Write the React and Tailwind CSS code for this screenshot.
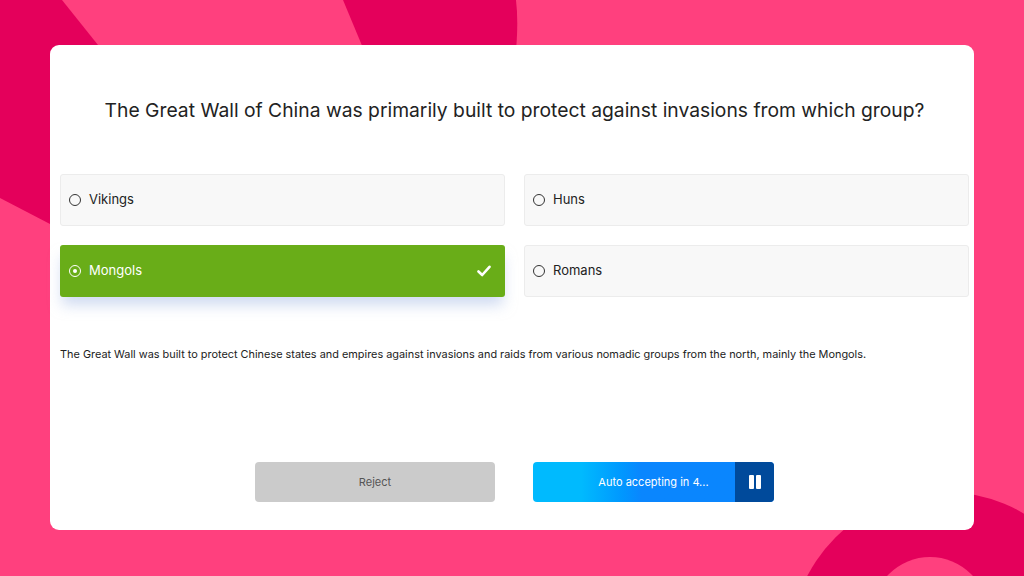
import React from "react";

function Radio({ selected }) {
  if (selected) {
    return (
      <span className="flex h-[12px] w-[12px] items-center justify-center rounded-full border-[1.5px] border-white">
        <span className="h-[4px] w-[4px] rounded-full bg-white" />
      </span>
    );
  }
  return <span className="h-[12px] w-[12px] rounded-full border-[1.5px] border-[#333]" />;
}

function Option({ label, selected }) {
  if (selected) {
    return (
      <div className="flex h-[52px] items-center rounded-[3px] bg-[#69ad18] pl-[9px] pr-[14px] text-white shadow-[0_10px_14px_-2px_rgba(170,190,230,0.55)]">
        <Radio selected />
        <span className="ml-[8px] text-[13px]">{label}</span>
        <svg className="ml-auto" width="14" height="12" viewBox="0 0 14 12">
          <path d="M1.5 6.5 L5.2 10 L12.5 1.8" fill="none" stroke="white" strokeWidth="2.6" strokeLinecap="round" strokeLinejoin="round" />
        </svg>
      </div>
    );
  }
  return (
    <div className="flex h-[52px] items-center rounded-[3px] border border-[#ececec] bg-[#f8f8f8] pl-[8px] text-[#222]">
      <Radio />
      <span className="ml-[8px] text-[13px]">{label}</span>
    </div>
  );
}

export default function App() {
  return (
    <div
      className="relative h-[576px] w-[1024px] overflow-hidden bg-[#ff407e]"
      style={{ fontFamily: "Inter, 'Liberation Sans', sans-serif" }}
    >
      <svg className="absolute left-0 top-0" width="1024" height="576" viewBox="0 0 1024 576">
        <path d="M0 0 L62 0 L110 60 L50 224 L0 198 Z" fill="#e4005b" />
        <path d="M343 0 L516 0 Q519 25 515 60 L368 60 Z" fill="#e4005b" />
        <circle cx="945" cy="647" r="155" fill="#e4005b" />
        <circle cx="930" cy="615" r="58" fill="#ff407e" />
      </svg>
      <div className="relative ml-[50px] mt-[45px] flex h-[485px] w-[924px] flex-col rounded-[9px] bg-white pl-[10px] pr-[5px]">
        <h1 className="mt-[52px] text-center text-[19.3px] leading-[26px] text-[#222]">
          The Great Wall of China was primarily built to protect against invasions from which group?
        </h1>
        <div className="mt-[51px] grid grid-cols-2 gap-x-[19px] gap-y-[19px]">
          <Option label="Vikings" />
          <Option label="Huns" />
          <Option label="Mongols" selected />
          <Option label="Romans" />
        </div>
        <p className="mt-[50px] text-[10.9px] leading-[14px] text-[#222]">
          The Great Wall was built to protect Chinese states and empires against invasions and raids from various nomadic groups from the north, mainly the Mongols.
        </p>
        <div className="mt-[101px] flex justify-center gap-[38px]">
          <button className="h-[40px] w-[240px] rounded-[4px] bg-[#cbcbcb] text-[11px] text-[#555]">
            Reject
          </button>
          <div className="relative flex h-[40px] w-[241px] items-center justify-center overflow-hidden rounded-[4px] bg-gradient-to-r from-[#00bafe] from-20% to-[#0a86fe] to-45%">
            <span className="text-[11px] text-white">Auto accepting in 4...</span>
            <div className="absolute right-0 top-0 flex h-full w-[39px] items-center justify-center gap-[2px] bg-[#004a9b]">
              <span className="h-[14px] w-[5px] rounded-[1px] bg-white" />
              <span className="h-[14px] w-[5px] rounded-[1px] bg-white" />
            </div>
          </div>
        </div>
      </div>
    </div>
  );
}
